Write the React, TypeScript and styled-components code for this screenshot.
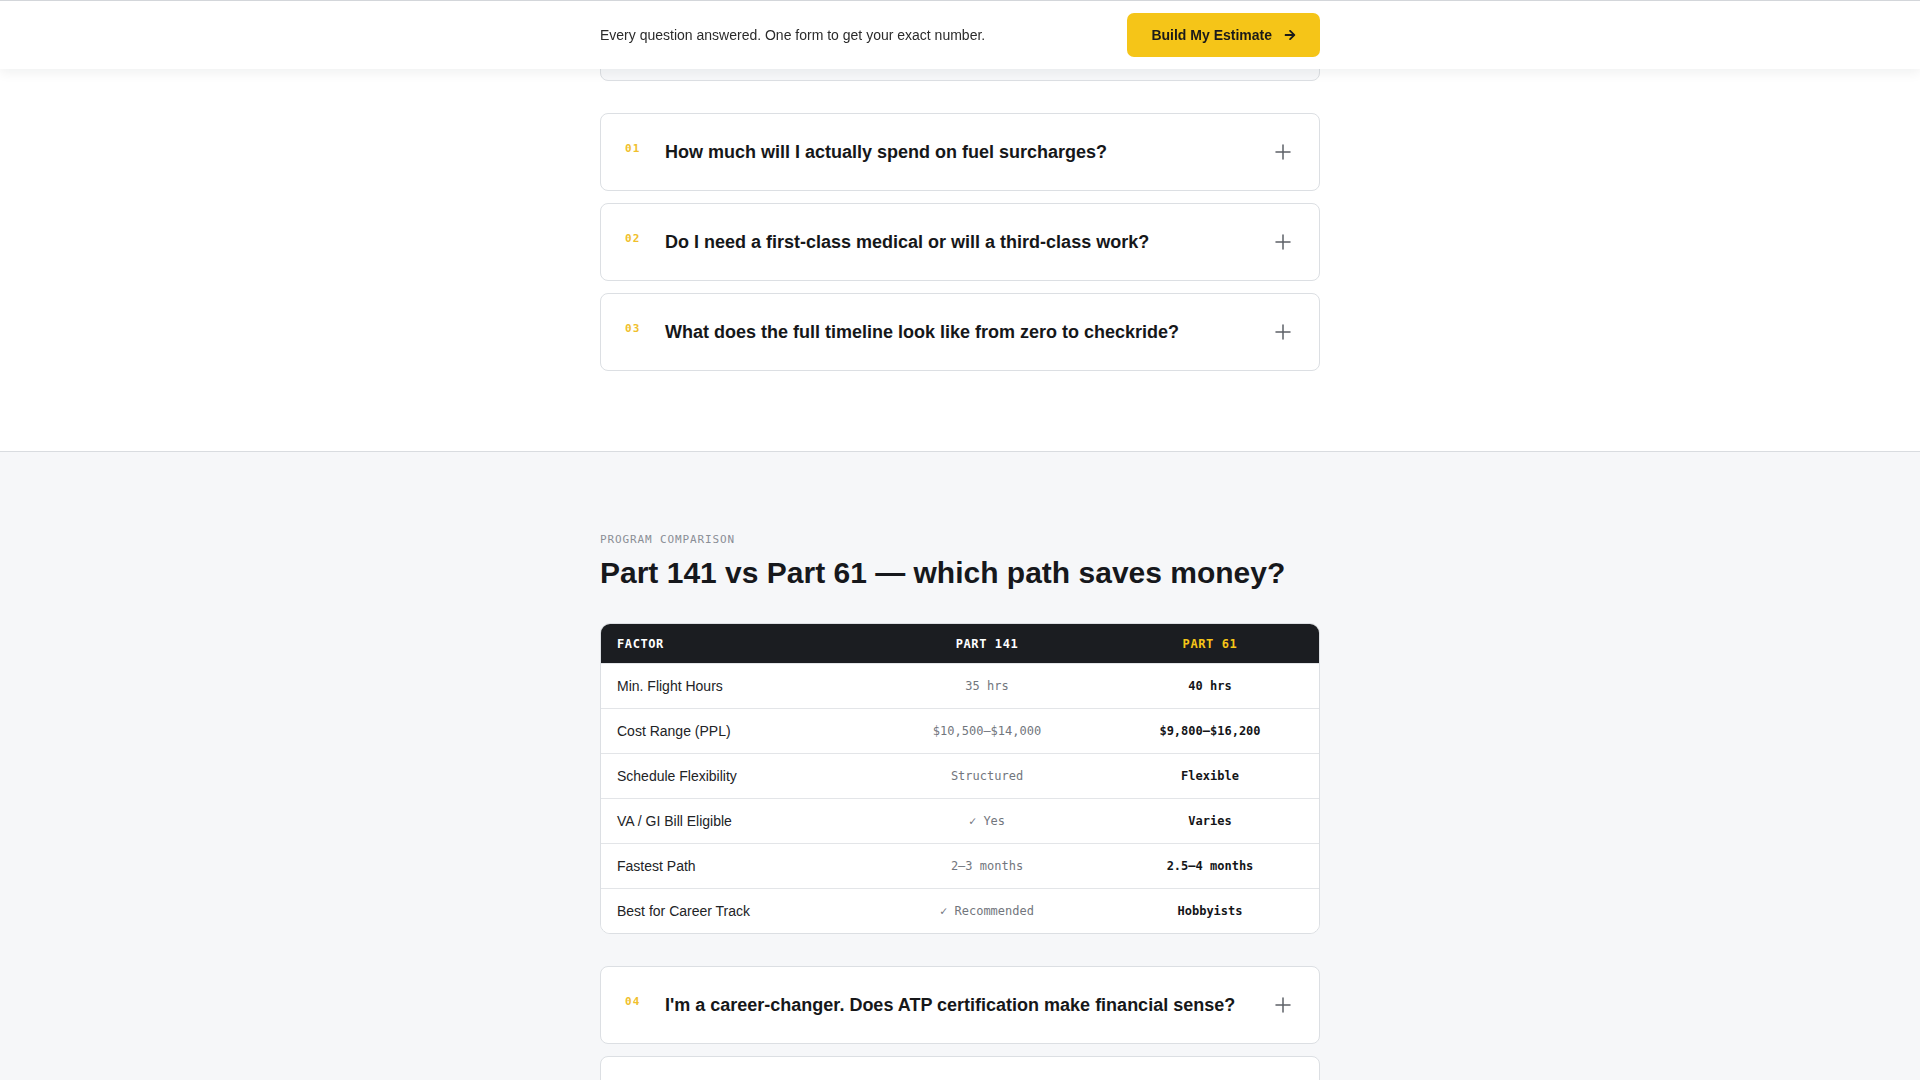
import React from 'react';
import styled, { createGlobalStyle } from 'styled-components';
import { Plus } from 'lucide-react';
import { FaArrowRight } from 'react-icons/fa';

const sans = `"Liberation Sans", Arial, sans-serif`;
const mono = `"DejaVu Sans Mono", "Liberation Mono", monospace`;

const GlobalStyle = createGlobalStyle`
  *, *::before, *::after { box-sizing: border-box; }
  html, body {
    margin: 0;
    padding: 0;
    overflow: hidden;
    background: #ffffff;
  }
  body {
    font-family: ${sans};
    color: #1a1a1a;
  }
`;

/* ---------- sticky call-to-action bar ---------- */

const TopBar = styled.header`
  position: fixed;
  top: 0;
  left: 0;
  right: 0;
  z-index: 10;
  height: 69px;
  background: #ffffff;
  border-top: 1px solid #d3d6da;
  box-shadow: 0 3px 12px rgba(20, 24, 32, 0.07);
`;

const BarInner = styled.div`
  width: 720px;
  height: 100%;
  margin: 0 auto;
  display: flex;
  align-items: center;
  justify-content: space-between;
`;

const BarText = styled.p`
  margin: 0;
  font-size: 14px;
  color: #2b2b2b;
`;

const CtaButton = styled.button`
  display: inline-flex;
  align-items: center;
  gap: 12px;
  height: 44px;
  padding: 0 24px;
  border: none;
  border-radius: 7px;
  background: #f5c518;
  color: #1a1a1a;
  font: 700 14px ${sans};
  cursor: pointer;
`;

/* ---------- page sections ---------- */

const WhiteSection = styled.section`
  background: #ffffff;
  padding: 3px 0 80px;
  border-bottom: 1px solid #d9dce0;
`;

const GraySection = styled.section`
  background: #f6f7f9;
  padding: 80px 0 80px;
`;

const Container = styled.div`
  width: 720px;
  margin: 0 auto;
`;

const Groups = styled.div`
  display: flex;
  flex-direction: column;
  gap: 32px;
`;

/* ---------- FAQ accordion ---------- */

const FaqList = styled.div`
  display: flex;
  flex-direction: column;
  gap: 12px;
`;

/* lower edge of an expanded answer panel, scrolled up under the bar */
const PanelTail = styled.div`
  height: 78px;
  background: #f7f8fa;
  border: 1px solid #dcdfe3;
  border-radius: 8px;
`;

const FaqCard = styled.div`
  display: flex;
  align-items: flex-start;
  gap: 24px;
  padding: 25px 24px;
  background: #ffffff;
  border: 1px solid #dcdfe3;
  border-radius: 8px;
`;

const FaqNum = styled.span`
  flex: 0 0 16px;
  margin-top: 4px;
  font: 700 11px/1 ${mono};
  letter-spacing: 0.1em;
  color: #f0c02c;
`;

const FaqTitle = styled.h3`
  flex: 1;
  margin: 0;
  font-size: 18px;
  line-height: 26px;
  font-weight: 700;
  color: #161719;
`;

const PlusBox = styled.span`
  flex: 0 0 24px;
  height: 26px;
  display: flex;
  align-items: center;
  justify-content: center;
  color: #5d6067;
`;

/* ---------- comparison table ---------- */

const Eyebrow = styled.div`
  margin-bottom: 7px;
  font: 400 11px/16px ${mono};
  letter-spacing: 0.08em;
  text-transform: uppercase;
  color: #8a8e96;
`;

const Heading = styled.h2`
  margin: 0 0 32px;
  font-size: 30px;
  line-height: 36px;
  font-weight: 700;
  color: #16181c;
`;

const Table = styled.div`
  border: 1px solid #dcdfe3;
  border-radius: 10px;
  overflow: hidden;
  background: #ffffff;
`;

const Row = styled.div<{ $head?: boolean }>`
  box-sizing: content-box;
  display: grid;
  grid-template-columns: 272px 228px 1fr;
  align-items: center;
  height: ${(p) => (p.$head ? 39 : 44)}px;
  background: ${(p) => (p.$head ? '#1b1d21' : '#ffffff')};

  & + & {
    border-top: 1px solid #e3e5e8;
  }
`;

const HeadCell = styled.div<{ $accent?: boolean; $center?: boolean }>`
  padding-left: ${(p) => (p.$center ? 0 : 16)}px;
  text-align: ${(p) => (p.$center ? 'center' : 'left')};
  font: 700 12px ${mono};
  letter-spacing: 0.05em;
  text-transform: uppercase;
  color: ${(p) => (p.$accent ? '#f5c518' : '#ffffff')};
`;

const FactorCell = styled.div`
  padding-left: 16px;
  font-size: 14px;
  color: #222326;
`;

const ValueCell = styled.div<{ $strong?: boolean }>`
  text-align: center;
  font: ${(p) => (p.$strong ? 700 : 400)} 12px ${mono};
  color: ${(p) => (p.$strong ? '#141518' : '#72767d')};
`;

type Faq = { num: string; title: string };

const topFaqs: Faq[] = [
  { num: '01', title: 'How much will I actually spend on fuel surcharges?' },
  { num: '02', title: 'Do I need a first-class medical or will a third-class work?' },
  { num: '03', title: 'What does the full timeline look like from zero to checkride?' },
];

const lowerFaqs: Faq[] = [
  { num: '04', title: "I'm a career-changer. Does ATP certification make financial sense?" },
  { num: '05', title: 'Can I finance flight training, and what rates should I expect?' },
];

const comparison = [
  { factor: 'Min. Flight Hours', p141: '35 hrs', p61: '40 hrs' },
  { factor: 'Cost Range (PPL)', p141: '$10,500–$14,000', p61: '$9,800–$16,200' },
  { factor: 'Schedule Flexibility', p141: 'Structured', p61: 'Flexible' },
  { factor: 'VA / GI Bill Eligible', p141: '✓ Yes', p61: 'Varies' },
  { factor: 'Fastest Path', p141: '2–3 months', p61: '2.5–4 months' },
  { factor: 'Best for Career Track', p141: '✓ Recommended', p61: 'Hobbyists' },
];

function FaqItem({ faq }: { faq: Faq }) {
  return (
    <FaqCard>
      <FaqNum>{faq.num}</FaqNum>
      <FaqTitle>{faq.title}</FaqTitle>
      <PlusBox>
        <Plus size={24} strokeWidth={1.5} />
      </PlusBox>
    </FaqCard>
  );
}

export default function App() {
  return (
    <>
      <GlobalStyle />
      <TopBar>
        <BarInner>
          <BarText>Every question answered. One form to get your exact number.</BarText>
          <CtaButton type="button">
            Build My Estimate
            <FaArrowRight size={12} />
          </CtaButton>
        </BarInner>
      </TopBar>

      <main>
        <WhiteSection>
          <Container>
            <Groups>
              <FaqList>
                <PanelTail />
              </FaqList>
              <FaqList>
                {topFaqs.map((f) => (
                  <FaqItem key={f.num} faq={f} />
                ))}
              </FaqList>
            </Groups>
          </Container>
        </WhiteSection>

        <GraySection>
          <Container>
            <Eyebrow>Program Comparison</Eyebrow>
            <Heading>Part 141 vs Part 61 — which path saves money?</Heading>
            <Groups>
              <Table>
                <Row $head>
                  <HeadCell>Factor</HeadCell>
                  <HeadCell $center>Part 141</HeadCell>
                  <HeadCell $center $accent>Part 61</HeadCell>
                </Row>
                {comparison.map((r) => (
                  <Row key={r.factor}>
                    <FactorCell>{r.factor}</FactorCell>
                    <ValueCell>{r.p141}</ValueCell>
                    <ValueCell $strong>{r.p61}</ValueCell>
                  </Row>
                ))}
              </Table>
              <FaqList>
                {lowerFaqs.map((f) => (
                  <FaqItem key={f.num} faq={f} />
                ))}
              </FaqList>
            </Groups>
          </Container>
        </GraySection>
      </main>
    </>
  );
}
